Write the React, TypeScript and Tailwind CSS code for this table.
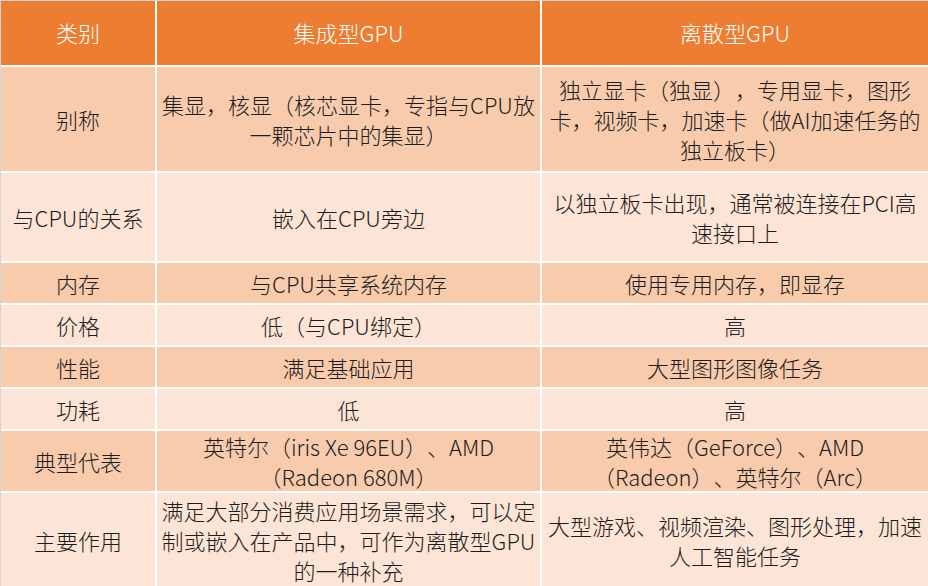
import React from 'react';

type Row = {
  label: string;
  a: string[];
  b: string[];
  h: string;
  dark: boolean;
};

const rows: Row[] = [
  {
    label: '别称',
    a: ['集显，核显（核芯显卡，专指与CPU放', '一颗芯片中的集显）'],
    b: ['独立显卡（独显），专用显卡，图形', '卡，视频卡，加速卡（做AI加速任务的', '独立板卡）'],
    h: 'h-[104px]',
    dark: true,
  },
  {
    label: '与CPU的关系',
    a: ['嵌入在CPU旁边'],
    b: ['以独立板卡出现，通常被连接在PCI高', '速接口上'],
    h: 'h-[88px]',
    dark: false,
  },
  { label: '内存', a: ['与CPU共享系统内存'], b: ['使用专用内存，即显存'], h: 'h-[40px]', dark: true },
  { label: '价格', a: ['低（与CPU绑定）'], b: ['高'], h: 'h-[40px]', dark: false },
  { label: '性能', a: ['满足基础应用'], b: ['大型图形图像任务'], h: 'h-[40px]', dark: true },
  { label: '功耗', a: ['低'], b: ['高'], h: 'h-[40px]', dark: false },
  {
    label: '典型代表',
    a: ['英特尔（iris Xe 96EU）、AMD', '（Radeon 680M）'],
    b: ['英伟达（GeForce）、AMD', '（Radeon）、英特尔（Arc）'],
    h: 'h-[60px]',
    dark: true,
  },
  {
    label: '主要作用',
    a: ['满足大部分消费应用场景需求，可以定', '制或嵌入在产品中，可作为离散型GPU', '的一种补充'],
    b: ['大型游戏、视频渲染、图形处理，加速', '人工智能任务'],
    h: 'h-[93px]',
    dark: false,
  },
];

function Cell({ lines, bg, h }: { lines: string[]; bg: string; h: string }) {
  return (
    <div className={`${bg} ${h} flex flex-col items-center justify-center px-[4px] text-center`}>
      {lines.map((l, i) => (
        <div key={i} className="whitespace-nowrap">
          {l}
        </div>
      ))}
    </div>
  );
}

export default function App() {
  return (
    <div
      className="w-[928px] h-[586px] overflow-hidden bg-white border-t border-l border-[#d4d4d4] text-[22px] leading-[30px] font-light text-[#1c1c1c] [text-spacing-trim:space-all]"
      style={{ fontFamily: '"Noto Sans CJK SC", "Noto Sans", sans-serif' }}
    >
      <div className="grid grid-cols-[154px_383px_386px] gap-[2px]">
        <Cell lines={['类别']} bg="bg-[#ED7D31] text-white" h="h-[64px] pb-[2px]" />
        <Cell lines={['集成型GPU']} bg="bg-[#ED7D31] text-white" h="h-[64px] pb-[2px]" />
        <Cell lines={['离散型GPU']} bg="bg-[#ED7D31] text-white" h="h-[64px] pb-[2px]" />
        {rows.map((r) => {
          const bg = r.dark ? 'bg-[#F8CBAD]' : 'bg-[#FCE4D6]';
          return (
            <React.Fragment key={r.label}>
              <Cell lines={[r.label]} bg={bg} h={r.h} />
              <Cell lines={r.a} bg={bg} h={r.h} />
              <Cell lines={r.b} bg={bg} h={r.h} />
            </React.Fragment>
          );
        })}
      </div>
    </div>
  );
}
